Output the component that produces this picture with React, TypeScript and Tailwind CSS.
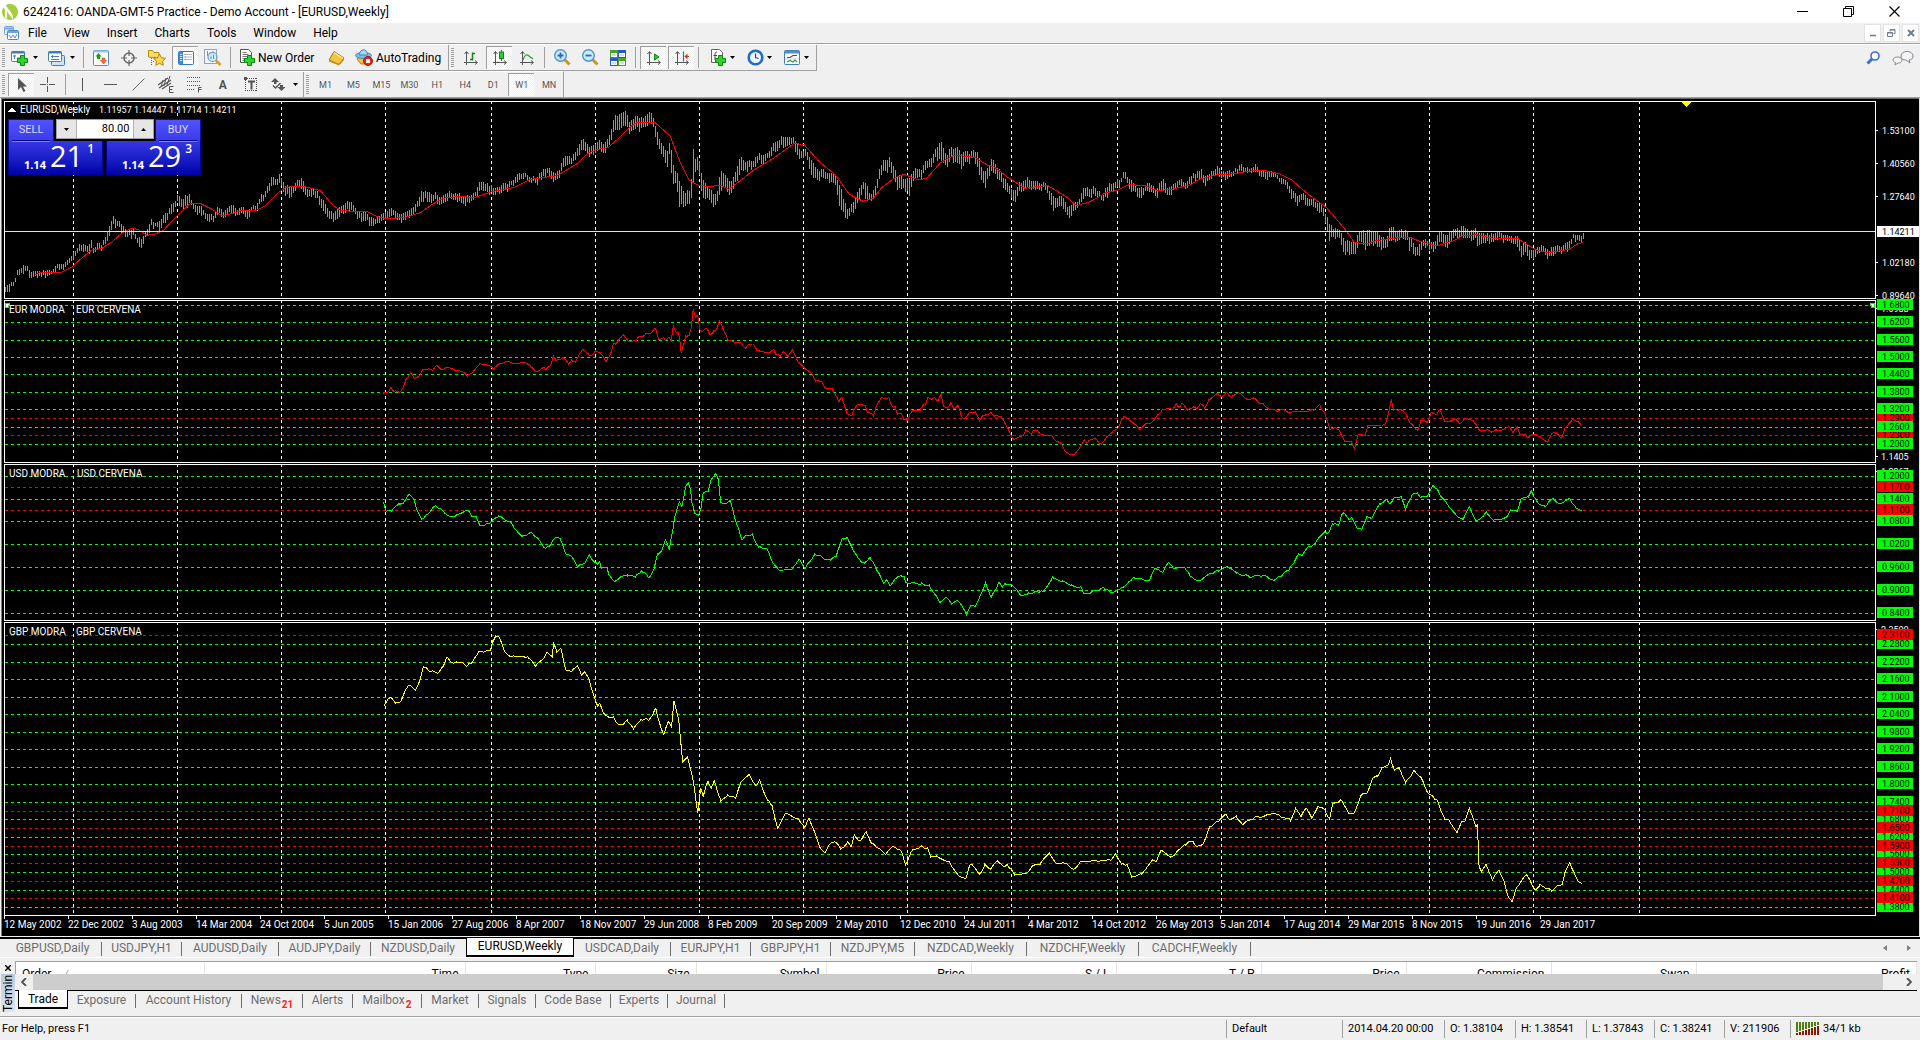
import React from "react";

/* ---------- chart data ---------- */

type Segment = { x0: number; sx: number; y0: number; pts: string };

const SCALE_Y = 3;

const RANGE: Segment[] = [
  {
    x0: 0, sx: 2.45, y0: 100,
    pts: "12,563,582;22,552,570;28,543,550;35,543,549;42,510,528;50,505,525;57,495,515;66,503,520;72,513,532;80,515,530;90,508,527;100,515,530;112,508,528;125,515,528;135,495,510;145,495,512;155,495,515;165,480,500;180,460,480;190,438,460;205,435,452;213,440,455;222,420,450;229,445,463;240,430,450;250,430,445;260,400,430;270,365,395;277,353,378;285,358,380;292,360,378;300,380,400;312,392,413;320,385,410;330,398,408;338,415,440;345,415,442;352,400,420;362,380,400;370,362,382;380,365,380;390,365,392;400,345,372;410,335,355;418,312,335;428,303,320;435,282,308;443,297,322;452,290,322;462,282,312;470,310,325;480,315,338;490,318,342;500,335,350;510,342,362;518,345,358;524,345,365;532,325,348;540,325,345;548,335,350;556,325,345;565,315,338;572,315,342;580,332,350;590,318,335;600,332,350;610,325,345;620,318,330;630,310,328;640,285,308;650,272,290;658,250,275;665,232,260;675,238,255;686,222,250;690,245,275;700,255,280;712,262,295;720,255,275;728,245,262;735,233,258;743,245,280;752,270,290;762,262,285;770,265,282;780,280,305;790,300,325;800,320,350;810,335,358;818,335,360;827,320,352;836,315,340;845,310,335;857,303,330;867,320,340;876,335,352;886,335,360;897,342,362;905,350,378;915,355,372;925,350,375;935,345,365;945,330,355;955,322,345;965,335,355;975,340,362;985,340,362;995,332,352;1005,328,350;1015,315,340;1025,295,318;1032,273,300;1042,275,300;1050,272,300;1057,290,312;1067,280,305;1078,290,312;1090,277,300;1102,277,298;1115,280,300;1127,283,302;1140,290,315;1152,285,305;1165,270,288;1175,242,268;1187,248,270;1200,255,275;1212,265,285;1225,255,272;1240,250,270;1255,238,255;1270,222,245;1280,218,238;1290,222,238;1303,232,248;1315,230,252;1325,218,238;1337,203,225;1350,208,230;1357,220,245;1367,213,230;1380,175,210;1388,168,195;1400,170,192;1410,155,178;1417,133,160;1425,117,145;1435,130,158;1445,140,165;1455,130,158;1465,120,150;1475,128,158;1485,125,155;1495,95,125;1504,45,92;1515,48,92;1525,42,80;1533,35,72;1540,65,95;1550,52,90",
  },
  {
    x0: 560, sx: 2.904, y0: 100,
    pts: "222,52,85;230,52,95;240,55,82;250,42,72;260,35,68;270,55,78;278,85,125;290,120,148;300,142,180;307,155,203;312,150,190;318,127,160;323,150,225;330,210,255;337,210,245;342,230,310;347,250,327;353,262,310;360,275,320;366,285,318;371,263,305;377,280,308;381,230,292;387,138,240;393,180,205;400,165,207;406,198,248;414,240,290;422,245,297;430,263,295;440,275,312;452,285,315;458,272,308;463,212,282;470,212,260;480,225,262;492,247,282;500,240,275;510,215,240;516,188,240;527,168,208;538,190,215;550,178,205;560,185,208;570,168,195;580,158,188;590,165,188;600,162,182;610,142,170;620,125,155;630,128,158;640,112,145;650,110,148;660,112,132;667,112,132;676,105,132;683,122,150;690,140,178;700,155,175;712,147,170;720,162,195;730,180,225;742,202,238;753,212,238;764,207,232;772,225,250;780,218,242;790,215,240;800,235,262;808,252,310;815,265,332;822,300,340;832,320,360;838,330,355;845,310,335;852,305,340;860,285,320;868,262,298;880,247,272;887,245,295;898,285,305;908,275,302;916,258,290;925,215,245;938,180,212;948,185,220;956,170,205;965,195,235;972,210,240;980,230,275;990,230,262;997,240,270;1008,235,280;1013,232,282;1022,215,245;1033,203,230;1045,212,240;1055,192,215;1067,178,205;1080,170,192;1090,145,172;1100,130,180;1108,120,172;1115,160,195;1125,165,198;1133,137,168;1143,145,188;1155,145,188;1165,165,208;1177,150,188;1188,162,190;1200,152,172;1208,152,188;1215,172,230;1225,208,240;1235,215,260;1245,200,228;1253,175,212;1262,192,225;1272,208,245;1282,225,255;1293,242,278;1305,258,285;1313,270,300;1322,272,303;1332,248,275;1345,248,272;1355,233,260;1367,245,270;1382,240,262;1392,250,272;1405,248,265;1415,260,285;1425,280,312;1433,290,330;1443,290,315;1453,290,315;1463,300,335;1472,320,340;1480,315,348;1490,312,335;1500,308,325;1510,288,315;1520,258,295;1530,262,285;1540,265,290;1552,260,282;1566,278,292",
  },
  {
    x0: 1080, sx: 2.904, y0: 100,
    pts: "65,285,300;70,270,290;80,255,285;92,245,268;102,245,268;110,240,262;118,240,255;127,216,240;137,230,250;148,240,272;157,258,280;167,262,285;175,265,295;185,258,280;195,252,278;205,252,275;215,262,290;225,262,285;235,242,268;243,237,268;252,262,285;260,262,292;268,250,275;280,242,262;292,240,260;305,245,265;315,235,258;325,222,240;337,218,238;350,205,235;358,228,255;370,225,245;380,218,235;390,205,225;402,200,225;410,215,235;422,212,238;433,215,238;445,210,225;455,205,222;465,192,215;475,200,220;485,203,220;497,203,215;509,192,215;517,210,228;527,215,232;540,218,235;552,215,230;565,218,232;577,232,245;590,238,250;600,248,268;610,258,285;620,275,298;632,288,315;645,280,302;655,282,318;667,302,322;680,300,322;690,308,335;697,305,335;705,325,345;712,345,370;718,355,400;725,375,422;733,385,415;743,385,412;752,388,415;760,402,440;766,430,472;775,420,460;783,420,455;790,425,462;797,430,465;805,400,445;812,392,425;822,390,430;830,400,448;838,388,435;848,392,430;857,395,438;868,405,445;877,410,445;888,415,440;897,390,425;905,372,420;913,392,420;925,388,418;937,392,418;946,385,412;953,408,440;963,418,452;975,440,462;985,432,465;995,420,445;1008,425,445;1020,425,450;1030,425,448;1043,392,428;1055,405,430;1066,405,442;1078,392,422;1090,385,412;1102,385,412;1113,377,408;1120,385,415;1132,390,418;1145,385,415;1155,395,438;1167,402,430;1180,405,435;1192,400,425;1203,395,420;1217,398,418;1230,402,420;1245,405,425;1255,415,442;1263,412,432;1270,402,445;1280,435,465;1293,430,465;1305,450,480;1317,450,478;1328,440,460;1340,438,460;1353,445,468;1365,448,468;1377,438,462;1387,432,455;1397,445,462;1410,425,450;1422,420,442;1433,403,420;1445,402,420;1457,405,425;1462,390,415",
  },
];

const AVERAGE: Segment[] = [
  {
    x0: 0, sx: 2.45, y0: 100,
    pts: "85,525;100,517;125,518;150,517;175,502;200,475;225,450;250,445;275,425;300,398;325,384;340,390;360,406;380,402;400,392;420,365;440,340;465,312;490,310;520,328;545,348;570,340;590,332;630,330;650,318;680,280;700,262;740,258;785,272;815,315;835,332;900,335;925,350;950,357;1000,350;1030,338;1060,312;1085,295;1120,290;1165,292;1205,275;1260,262;1300,238;1365,227;1415,190;1440,160;1465,148;1490,143;1520,110;1545,80",
  },
  {
    x0: 560, sx: 2.904, y0: 100,
    pts: "222,68;275,67;320,108;350,190;375,240;400,255;430,260;467,256;490,268;520,245;560,212;620,175;680,130;710,135;750,182;800,225;840,283;880,304;910,295;935,262;970,235;1000,223;1040,240;1065,235;1105,188;1145,165;1205,172;1240,195;1260,200;1300,232;1350,265;1415,256;1470,290;1500,317;1540,305;1566,290",
  },
  {
    x0: 1080, sx: 2.904, y0: 100,
    pts: "70,280;110,270;145,253;190,258;225,272;270,267;320,255;345,238;400,224;440,222;510,211;540,212;580,222;615,240;665,285;715,322;765,382;797,427;830,432;860,422;905,415;955,411;990,425;1035,438;1085,422;1110,408;1150,404;1200,415;1270,415;1300,435;1330,452;1360,458;1420,448;1445,432;1460,427",
  },
];

const EUR: Segment[] = [
  {
    x0: 0, sx: 2.45, y0: 100,
    pts: "938,880;950,878;958,862;965,874;982,875;988,862;995,838;1007,818;1015,835;1027,827;1035,810;1050,806;1060,812;1070,796;1083,810;1093,802;1110,808;1135,816;1145,828;1158,818;1175,793;1200,797;1209,808;1222,793;1240,783;1260,790;1285,787;1298,795;1313,816;1333,803;1337,810;1349,797;1356,768;1363,783;1380,772;1393,792;1400,780;1410,786;1427,748;1445,768;1460,752;1470,758;1485,784;1495,765;1503,730;1508,733;1520,712;1527,703;1540,725;1555,722",
  },
  {
    x0: 560, sx: 2.904, y0: 100,
    pts: "222,720;228,710;240,710;250,700;262,700;277,685;288,720;300,712;307,722;315,712;323,722;329,678;335,695;342,698;347,712;352,758;365,708;376,705;381,685;387,628;393,652;400,645;406,690;413,695;425,685;436,705;447,692;454,690;463,662;473,685;487,720;510,727;525,727;538,745;547,733;561,732;572,752;600,758;612,757;620,748;628,765;640,768;650,755;662,770;675,750;690,783;710,805;730,820;742,843;760,846;772,865;790,865;810,905;818,892;833,940;847,948;853,930;865,913;887,917;893,938;903,940;910,948;918,920;932,895;955,892;963,918;973,920;980,942;992,942;998,958;1008,962;1015,945;1025,930;1045,933;1055,915;1062,912;1068,892;1080,900;1088,893;1097,903;1107,883;1113,918;1125,925;1135,910;1145,927;1156,915;1166,950;1175,955;1188,937;1207,935;1218,963;1227,947;1245,943;1252,938;1262,948;1280,948;1292,970;1305,995;1317,1018;1345,1008;1353,990;1368,1003;1375,990;1388,993;1395,1003;1427,1006;1435,1018;1455,1030;1467,1055;1480,1063;1495,1063;1510,1042;1523,1020;1530,1030;1540,1020;1555,1015;1566,1030",
  },
  {
    x0: 1080, sx: 2.904, y0: 100,
    pts: "62,1032;75,1015;95,995;110,985;120,960;128,948;155,968;172,987;190,973;205,972;240,928;270,928;280,912;288,923;297,910;312,930;330,922;340,925;350,910;362,925;375,900;400,880;413,890;425,877;440,892;462,879;485,898;508,895;520,910;532,912;545,925;560,928;575,933;590,928;608,940;625,933;640,935;680,930;696,913;702,930;712,942;725,988;740,982;752,990;768,1025;788,1025;797,1046;807,1005;828,1006;836,978;850,975;875,975;888,970;897,935;904,898;910,930;930,928;947,942;958,968;970,980;980,992;990,962;1008,967;1020,937;1035,943;1045,927;1060,965;1080,963;1090,957;1103,972;1117,955;1140,962;1155,980;1163,993;1185,990;1195,996;1210,988;1225,990;1245,980;1257,998;1270,980;1277,1003;1293,1003;1300,1012;1312,1003;1335,1008;1357,1027;1370,1000;1385,1000;1398,1015;1408,985;1430,957;1445,965;1455,975",
  },
];

const USD: Segment[] = [
  {
    x0: 360, sx: 1.2645, y0: 460,
    pts: "30,127;33,155;40,153;50,130;55,130;62,102;68,118;73,155;78,178;85,165;95,138;103,148;110,165;120,170;135,150;143,170;147,170;152,198;165,188;175,170;190,185;195,205;205,230;215,218;222,230;235,265;240,258;246,235;253,235;260,282;268,290;275,320;285,308;290,285;295,302;300,310;303,305;305,325;312,322;315,345;322,365;330,350;338,345;348,352;356,332;366,352;372,325;376,282;382,270;386,240;391,268;396,205;398,170;404,125;407,140;412,78;415,68;418,90;420,130;423,160;428,165;431,150;434,100;440,95;444,60;450,40;453,55;456,125;462,130;468,120;474,175;483,240;488,225;496,222;504,262;514,265;520,298;530,330;545,330;556,298;563,325;575,282;583,288;588,300;595,300;602,290;610,235;616,232;622,262;632,300;638,310;645,292;655,335;662,370;666,358;670,378;680,350;688,350;690,368;710,372;720,375;726,400;733,428;741,410;748,430;755,420;760,432;767,460;772,438;778,440;784,408;791,368;798,412;805,385;808,365;812,382;816,370;826,378;836,408;846,398;865,395;876,350;888,365;900,375;912,382;916,402;930,392;940,382;950,398;965,382;978,352;998,362;1005,325;1015,338;1022,308;1030,325;1043,322;1050,350;1060,362;1070,348;1085,332;1097,320;1110,338;1125,352;1143,345;1155,362;1175,330;1187,282;1192,288;1200,258;1205,255;1215,228;1220,215;1225,218;1230,190;1238,192;1243,158;1250,178;1254,172;1260,200;1267,208;1273,170;1280,172;1290,130;1298,118;1303,130;1308,112;1317,110;1322,148;1330,105;1337,97;1341,113;1350,108;1357,75;1361,85;1368,112;1380,148;1388,170;1395,178;1403,140;1411,182;1420,170;1424,155;1433,182;1443,178;1450,170;1455,150;1463,155;1468,118;1477,112;1481,92;1490,130;1500,138;1508,115;1515,130;1530,118;1537,140;1545,150",
  },
];

const GBP: Segment[] = [
  {
    x0: 360, sx: 1.2645, y0: 460,
    pts: "30,737;38,712;45,730;52,722;57,692;62,675;70,690;76,660;80,620;87,632;98,640;105,620;110,590;117,608;130,608;135,620;143,602;150,575;165,572;168,545;172,530;176,532;182,570;190,590;212,590;222,618;230,600;237,578;243,590;245,550;249,577;254,565;260,630;267,635;275,618;280,645;284,635;290,660;295,702;300,735;303,730;308,760;315,772;320,770;325,790;332,795;338,780;346,808;355,778;366,778;374,745;379,790;384,825;390,785;394,800;397,722;403,780;408,905;414,890;420,945;424,1005;427,1060;431,985;434,1010;440,962;444,985;448,962;456,1020;465,1005;475,1015;482,965;492,942;501,978;505,960;515,1020;521,1035;528,1105;538,1060;555,1080;563,1100;568,1075;575,1115;582,1165;588,1180;595,1150;602,1148;608,1167;617,1145;621,1160;625,1125;632,1143;640,1115;647,1150;660,1172;664,1183;673,1160;685,1175;690,1215;697,1175;709,1160;718,1165;722,1190;728,1190;745,1205;757,1248;766,1255;771,1215;775,1218;784,1243;790,1213;797,1228;806,1203;814,1220;818,1213;828,1245;842,1240;850,1217;860,1213;872,1178;880,1208;895,1213;902,1228;912,1203;950,1200;955,1180;963,1212;970,1213;976,1250;988,1243;1002,1200;1007,1205;1013,1170;1025,1193;1043,1153;1053,1143;1058,1160;1067,1148;1075,1100;1087,1080;1095,1062;1100,1080;1108,1068;1117,1093;1130,1075;1157,1060;1170,1075;1177,1080;1183,1045;1190,1070;1197,1045;1203,1072;1211,1042;1220,1048;1226,1078;1230,1030;1240,1020;1250,1060;1257,1058;1266,1005;1274,998;1280,955;1287,948;1292,922;1300,915;1303,895;1308,930;1314,922;1322,968;1333,932;1341,950;1350,998;1357,1010;1362,1020;1372,1080;1377,1080;1387,1118;1393,1085;1397,1085;1403,1045;1407,1070;1411,1100;1413,1092;1415,1215;1418,1235;1424,1213;1432,1260;1440,1230;1447,1265;1452,1310;1457,1325;1463,1280;1475,1245;1480,1262;1486,1290;1492,1273;1507,1293;1515,1275;1520,1273;1524,1235;1530,1210;1535,1235;1540,1262;1545,1268",
  },
];

/** Turns segments into [x, y1, y2?] rows in chart pixels. */
function rows(segs: Segment[]): number[][] {
  return segs.flatMap((s) =>
    s.pts.split(";").map((p) => {
      const [x, ...ys] = p.split(",").map(Number);
      return [s.x0 + x / s.sx, ...ys.map((y) => s.y0 + y / SCALE_Y)];
    })
  );
}

function sample(data: number[][], x: number): number[] {
  let i = 1;
  while (i < data.length - 1 && data[i][0] < x) i++;
  const a = data[i - 1];
  const b = data[i];
  const t = Math.min(1, Math.max(0, (x - a[0]) / (b[0] - a[0] || 1)));
  return a.slice(1).map((v, k) => v + (b[k + 1] - v) * t);
}

const noise = (n: number) => {
  const v = Math.sin(n * 12.9898) * 43758.5453;
  return v - Math.floor(v) - 0.5;
};

function linePath(segs: Segment[], jitter: number): string {
  const data = rows(segs);
  const pts = data.map((r) => [r[0], r[1]]);
  if (jitter > 0) {
    for (let x = data[0][0] + 1; x < data[data.length - 1][0]; x += 3) {
      pts.push([x, sample(data, x)[0] + noise(x) * jitter]);
    }
    pts.sort((a, b) => a[0] - b[0]);
  }
  return "M" + pts.map((p) => `${p[0].toFixed(1)} ${p[1].toFixed(1)}`).join("L");
}

function barsPath(): string {
  const data = rows(RANGE);
  let d = "";
  for (let x = 5; x <= 1583; x += 2) {
    const [hi, lo] = sample(data, x);
    const n = noise(x) * 3;
    d += `M${x}.5 ${Math.round(hi + n)}V${Math.round(lo + n + noise(x + 7) * 4)}`;
  }
  return d;
}

const PERIODS = [73, 177, 281, 385, 491, 595, 699, 803, 907, 1011, 1117, 1221, 1325, 1429, 1533, 1639];

const DATES = [
  "12 May 2002", "22 Dec 2002", "3 Aug 2003", "14 Mar 2004", "24 Oct 2004", "5 Jun 2005", "15 Jan 2006", "27 Aug 2006",
  "8 Apr 2007", "18 Nov 2007", "29 Jun 2008", "8 Feb 2009", "20 Sep 2009", "2 May 2010", "12 Dec 2010", "24 Jul 2011",
  "4 Mar 2012", "14 Oct 2012", "26 May 2013", "5 Jan 2014", "17 Aug 2014", "29 Mar 2015", "8 Nov 2015", "19 Jun 2016",
  "29 Jan 2017",
];

type Level = [number, string, "g" | "r"];

const EUR_LEVELS: Level[] = [
  [418, "1.2900", "r"], [435, "1.2300", "r"],
  [305, "1.6800", "g"], [322, "1.6200", "g"], [340, "1.5600", "g"], [357, "1.5000", "g"], [374, "1.4400", "g"],
  [392, "1.3800", "g"], [409, "1.3200", "g"], [427, "1.2600", "g"], [444, "1.2000", "g"],
];
const USD_LEVELS: Level[] = [
  [476, "1.2000", "g"], [499, "1.1400", "g"], [521, "1.0800", "g"], [544, "1.0200", "g"], [567, "0.9600", "g"],
  [590, "0.9000", "g"], [613, "0.8400", "g"], [487, "1.1700", "r"], [510, "1.1100", "r"],
];
const GBP_LEVELS: Level[] = [
  [644, "2.2800", "g"], [662, "2.2200", "g"], [679, "2.1600", "g"], [697, "2.1000", "g"], [714, "2.0400", "g"],
  [732, "1.9800", "g"], [749, "1.9200", "g"], [767, "1.8600", "g"], [784, "1.8000", "g"], [802, "1.7400", "g"],
  [819, "1.6800", "g"], [837, "1.6200", "g"], [854, "1.5600", "g"], [872, "1.5000", "g"], [890, "1.4400", "g"],
  [907, "1.3800", "g"],
  [635, "2.3100", "r"], [811, "1.7100", "r"], [828, "1.6500", "r"], [846, "1.5900", "r"], [863, "1.5300", "r"],
  [881, "1.4700", "r"], [898, "1.4100", "r"],
];

/* ---------- chart panes ---------- */

type PaneProps = {
  top: number;
  height: string;
  levels?: Level[];
  axis: [number, string][];
  axisInset?: number;
  label: string;
  children: React.ReactNode;
  overlay?: React.ReactNode;
};

function Pane({ top, height, levels = [], axis, axisInset = 4, label, children, overlay }: PaneProps) {
  return (
    <section aria-label={label} className={`flex ${height} shrink-0`}>
      <div className="relative min-w-0 flex-1 overflow-hidden border border-white">
        <svg className="block h-full w-full" shapeRendering="crispEdges">
          <g transform={`translate(-5 ${-top - 1})`} fill="none">
            {levels.map(([y, t, c]) => (
              <line key={t} x1="5" x2="120%" y1={y + 0.5} y2={y + 0.5} stroke={c === "g" ? "#00ff00" : "#ff0000"} strokeDasharray="3 3" />
            ))}
            {PERIODS.map((x) => (
              <line key={x} x1={x + 0.5} x2={x + 0.5} y1={top} y2="2000" stroke="#fff" strokeDasharray="3 3" />
            ))}
            {children}
          </g>
        </svg>
        {overlay}
      </div>
      <svg className="block h-full w-[43px] shrink-0 overflow-visible" fontFamily="Roboto, sans-serif" fontSize="9" shapeRendering="crispEdges">
        <g transform={`translate(0 ${-top})`}>
          {axis.map(([y, t]) => (
            <g key={t}>
              <line x1="0" x2="2" y1={y + 0.5} y2={y + 0.5} stroke="#fff" />
              <text x={axisInset + 1} y={y + 4} fill="#fff">{t}</text>
            </g>
          ))}
          {levels.map(([y, t, c]) => (
            <g key={t}>
              <rect x="1" y={y - 6} width="36" height="11" fill={c === "g" ? "#00ff00" : "#ff0000"} />
              <text x="6" y={y + 3} fill="#000">{t}</text>
            </g>
          ))}
          {label === "Price" && (
            <g>
              <rect x="1" y="226" width="42" height="11" fill="#fff" />
              <text x="6" y="235" fill="#000">1.14211</text>
            </g>
          )}
        </g>
      </svg>
    </section>
  );
}

function PaneTitle({ y, cur, x2 }: { y: number; cur: string; x2: number }) {
  return (
    <g fill="#fff" fontFamily="Roboto, sans-serif" fontSize="10">
      <text x="9" y={y}>{cur} MODRA</text>
      <text x={x2} y={y}>{cur} CERVENA</text>
    </g>
  );
}

function OneClick() {
  const top = "flex h-[22px] w-[46px] justify-center border border-b-0 border-[#1010a0] bg-linear-to-b from-[#5252ff] to-[#3a3aea] pt-[3px] text-[11px] leading-[14px] text-[#dcdcff]";
  const bottom = "flex h-[34px] w-[95px] items-end border border-t-0 border-[#0000a0] bg-linear-to-b from-[#3636e4] to-[#0000aa] text-white";
  const step = "flex w-[19px] items-center justify-center bg-[#e6e6e6]";
  return (
    <div className="absolute top-[17px] left-[3px] w-[193px] bg-black">
      <div className="flex justify-between">
        <button className={top}>SELL</button>
        <div className="flex h-5 w-[98px] border border-[#a0a0a0] bg-white">
          <button className={step} aria-label="Decrease volume">
            <svg width="5" height="3"><path d="M0 0H5L2.500 3Z" /></svg>
          </button>
          <input
            aria-label="Volume"
            defaultValue="80.00"
            className="w-[58px] min-w-0 flex-1 border-x border-[#b0b0b0] bg-white pr-[3px] text-right text-[11px] text-black outline-none"
          />
          <button className={step} aria-label="Increase volume">
            <svg width="5" height="3"><path d="M0 3H5L2.500 0Z" /></svg>
          </button>
        </div>
        <button className={top}>BUY</button>
      </div>
      <div className="flex justify-between">
        <div className={bottom}>
          <Quote a="1.14" b="21" c="1" />
        </div>
        <div className={bottom}>
          <Quote a="1.14" b="29" c="3" />
        </div>
      </div>
      <div className="absolute top-[21px] left-1 h-[2px] w-[38px] border-t border-b border-t-[#000080] border-b-[#8080ff]" />
      <div className="absolute top-[21px] right-1 h-[2px] w-[38px] border-t border-b border-t-[#000080] border-b-[#8080ff]" />
    </div>
  );
}

function Quote({ a, b, c }: { a: string; b: string; c: string }) {
  return (
    <div className="flex h-full w-full justify-end pr-2 font-['Open_Sans',sans-serif]">
      <span className="self-end pb-[2px] text-[11px] leading-[14px] font-bold">{a}</span>
      <span className="ml-1 text-[29px] leading-[29px]">{b}</span>
      <span className="ml-1 pt-[2px] text-[12px] leading-[12px] font-semibold">{c}</span>
    </div>
  );
}

function Chart() {
  return (
    <main className="flex h-[838px] border-r border-l border-[#f0f0f0] border-r-[#e0e0e0] bg-[#808080] pl-px">
      <div className="min-w-0 flex-1 border-t border-[#696969] bg-black">
        <div className="flex flex-col gap-px pt-[2px] pl-[2px]">
          <Pane
            label="Price"
            top={101}
            height="h-[198px]"
            axisInset={5}
            axis={[[130, "1.53100"], [163, "1.40560"], [196, "1.27640"], [262, "1.02180"], [295, "0.89640"]]}
            overlay={<OneClick />}
          >
            <path d={barsPath()} stroke="#00ff00" />
            <path d={linePath(AVERAGE, 0)} stroke="#ff0000" />
            <line x1="5" x2="120%" y1="231.5" y2="231.5" stroke="#ffff00" />
            <path d="M1682 102H1691L1686.500 107Z" fill="#ffff00" />
            <path d="M8 112H16L12 107Z" fill="#fff" />
            <g fill="#fff" fontFamily="Roboto, sans-serif">
              <text x="20" y="113" fontSize="10">EURUSD,Weekly</text>
              <text x="99" y="113" fontSize="9">1.11957 1.14447 1.11714 1.14211</text>
            </g>
          </Pane>
          <Pane label="EUR" top={300} height="h-[163px]" levels={EUR_LEVELS} axis={[[308, "1.6988"], [456, "1.1405"]]}>
            <path d={linePath(EUR, 1.6)} stroke="#ff0000" />
            <path d="M5 303h4v2h-1v2h-3zM1870 303h4v4h-3v-2h-1z" fill="#fff" stroke="#00ff00" />
            <PaneTitle y={313} cur="EUR" x2={76} />
          </Pane>
          <Pane label="USD" top={464} height="h-[157px]" levels={USD_LEVELS} axis={[[471, "1.2267"]]}>
            <path d={linePath(USD, 2.4)} stroke="#00ff00" />
            <PaneTitle y={477} cur="USD" x2={77} />
          </Pane>
          <Pane label="GBP" top={622} height="h-[294px]" levels={GBP_LEVELS} axis={[[629, "2.3500"]]}>
            <path d={linePath(GBP, 2.4)} stroke="#ffff00" />
            <PaneTitle y={635} cur="GBP" x2={76} />
          </Pane>
        </div>
        <ol className="flex overflow-hidden pl-[2px]">
          {DATES.map((d) => (
            <li key={d} className="w-16 shrink-0 text-[10px] leading-[12px] whitespace-nowrap text-white">
              <div className="h-[3px] w-px bg-white" />
              {d}
            </li>
          ))}
        </ol>
      </div>
    </main>
  );
}

/* ---------- icons ---------- */

function Svg({ w = 16, h = 16, children }: { w?: number; h?: number; children: React.ReactNode }) {
  return (
    <svg width={w} height={h} viewBox={`0 0 ${w} ${h}`} fill="none" className="shrink-0">
      {children}
    </svg>
  );
}

const Plus = ({ x, y }: { x: number; y: number }) => (
  <path transform={`translate(${x} ${y})`} d="M3.500 .5h4v3h3v4h-3v3h-4v-3h-3v-4h3z" fill="#2fd32f" stroke="#0a8a0a" />
);
const Axes = () => <path d="M3.500 2v13M1 12.500h13M1.500 4l2-2.500 2 2.500M12 10.500l2.500 2-2.500 2" stroke="#555" />;

const I = {
  logo: (
    <Svg w={16} h={16}>
      <circle cx="8" cy="8" r="8" fill="#a4cf3a" />
      <path d="M1 3 3.500 1 11 11v4.500L5 7.500V15L3 13.500V5.500z" fill="#fff" />
      <path d="M6.500 0H10l3 4v8l-1.500 2z" fill="#a4cf3a" />
    </Svg>
  ),
  doc: (
    <Svg w={15} h={14}>
      <rect x=".5" y=".5" width="9" height="8" rx="1" fill="#eef5fd" stroke="#6fa3dc" />
      <path d="M.5 2.500h9" stroke="#6fa3dc" strokeWidth="2" />
      <rect x="3.500" y="4.500" width="11" height="9" rx="1" fill="#fff" stroke="#4f86c6" />
      <path d="M4 6h10" stroke="#6fa3dc" strokeWidth="2" />
      <path d="M5 9l2 3 2-3 2 3 2-4" stroke="#5a8cc8" />
    </Svg>
  ),
  newChart: (
    <Svg w={17} h={16}>
      <rect x=".5" y="1.500" width="13" height="10" rx="1" fill="#fff" stroke="#3f7dbb" />
      <path d="M.5 2.500h13" stroke="#3f7dbb" strokeWidth="2" />
      <path d="M3.500 5v4M2 6h3M6 8h5" stroke="#4a7fb5" />
      <Plus x={6} y={5} />
    </Svg>
  ),
  profiles: (
    <Svg w={17} h={16}>
      <rect x="3.500" y="5.500" width="13" height="10" rx="1" fill="#cfe2f6" stroke="#3f7dbb" />
      <rect x=".5" y="1.500" width="13" height="10" rx="1" fill="#fff" stroke="#3f7dbb" />
      <path d="M.5 2.500h13" stroke="#3f7dbb" strokeWidth="2" />
      <path d="M3 6.500h8M4.500 5v3M3 9.500h8" stroke="#4a7fb5" />
    </Svg>
  ),
  market: (
    <Svg>
      <rect x=".5" y=".5" width="15" height="15" rx="1" fill="#fff" stroke="#4f8fd0" />
      <path d="M1 1.500h14" stroke="#9cc6ee" strokeWidth="2" />
      <path d="M5.500 3 8.500 6.500H7V9H4V6.500H2.500z" fill="#14a014" />
      <path d="M10.500 14 7.500 10.500H9V8h3v2.500h1.500z" fill="#f0702a" stroke="#c04010" strokeWidth=".5" />
    </Svg>
  ),
  target: (
    <Svg>
      <circle cx="8" cy="8" r="5" stroke="#666" strokeWidth="1.500" />
      <path d="M8 0v6M8 10v6M0 8h6M10 8h6" stroke="#666" strokeWidth="1.200" />
    </Svg>
  ),
  folderStar: (
    <Svg w={18} h={17}>
      <path d="M.5 8V1.500h4l1.500 2h5V9z" fill="#f8dc68" stroke="#b88a10" />
      <path d="M3.500 9v7M5 12.500h2" stroke="#666" strokeDasharray="1 1" />
      <path d="M11.500 5l1.900 3.800 4.100.5-3 2.900.8 4.100-3.800-2-3.700 2 .7-4.100-3-2.900 4.100-.5z" fill="#fbd84c" stroke="#b8860b" />
    </Svg>
  ),
  terminal: (
    <Svg w={16} h={14}>
      <rect x=".5" y=".5" width="15" height="13" rx="1" fill="#fff" stroke="#2f78c4" />
      <rect x="1" y="1" width="4" height="12" fill="#3b8ad8" />
      <path d="M2 3.500h2M2 5.500h2M2 7.500h2M2 9.500h2" stroke="#cfe4f8" />
      <path d="M7 3.500h7M7 6h7M7 8.500h7" stroke="#a8bccc" />
      <path d="M6.500 3.500h1M6.500 6h1M6.500 8.500h1" stroke="#c03030" />
    </Svg>
  ),
  tester: (
    <Svg w={18} h={17}>
      <rect x=".5" y=".5" width="12" height="14" fill="#f2f6fa" stroke="#8fa4b8" />
      <path d="M3.500 2v5M6 3v3M9 2v4" stroke="#7890a8" />
      <circle cx="8.500" cy="8" r="4.500" fill="#cfe6fa" fillOpacity=".85" stroke="#6c9cc8" strokeWidth="1.200" />
      <path d="M7 10V7.500M9.500 10V6" stroke="#6a8cae" />
      <path d="M12 11.500l4.500 4.500" stroke="#d8a020" strokeWidth="2.500" />
    </Svg>
  ),
  order: (
    <Svg w={17} h={17}>
      <path d="M1.500.5h8l3 3v10h-11z" fill="#fff" stroke="#555" />
      <path d="M3.500 3.500h4M3.500 5.500h6M3.500 7.500h6M3.500 9.500h3M3.500 11.500h3" stroke="#777" />
      <Plus x={5} y={6} />
    </Svg>
  ),
  book: (
    <Svg w={17} h={16}>
      <path d="M1 10 6 1.500l10 6.500-5 6.500z" fill="#f4c440" stroke="#a87408" />
      <path d="M1 10l10 4.500 5-6.500v2l-5 5.500L1 11.500z" fill="#c88c18" />
      <path d="M6 2.500l9 6" stroke="#fbe69a" strokeWidth="1.500" />
    </Svg>
  ),
  auto: (
    <Svg w={18} h={17}>
      <path d="M2 10c1-3 13-3 14 0l-2 5H6z" fill="#f3c13c" stroke="#b88210" />
      <ellipse cx="8.500" cy="6.500" rx="8" ry="3" fill="#7fbbe2" stroke="#3f86b8" />
      <path d="M4.500 6c0-7 8-7 8 0z" fill="#a9d6f0" stroke="#3f86b8" />
      <circle cx="13" cy="12" r="4.500" fill="#e02818" stroke="#a81408" />
      <rect x="11" y="10" width="4" height="4" fill="#fff" />
    </Svg>
  ),
  bars: (
    <Svg>
      <Axes />
      <path d="M9.500 2.500v8M9.500 3.500H12M7 9.500h2.500" stroke="#0a8a1a" strokeWidth="1.500" />
    </Svg>
  ),
  candles: (
    <Svg>
      <Axes />
      <path d="M9.500 0v11" stroke="#0a8a1a" />
      <rect x="7.500" y="2" width="4" height="6.500" fill="#35c735" stroke="#0a8a1a" />
    </Svg>
  ),
  line: (
    <Svg>
      <Axes />
      <path d="M4 10C6 4 8 4 10 6s3 2 4 3" stroke="#2c9c3c" strokeWidth="1.200" />
    </Svg>
  ),
  zoomIn: (
    <Svg w={17} h={17}>
      <path d="M10 10l5.500 5.500" stroke="#c8981c" strokeWidth="3" />
      <circle cx="6.500" cy="6.500" r="5.800" fill="#cdeafc" stroke="#4f94cf" strokeWidth="1.400" />
      <path d="M3.500 6.500h6M6.500 3.500v6" stroke="#2b6cb0" strokeWidth="1.800" />
    </Svg>
  ),
  zoomOut: (
    <Svg w={17} h={17}>
      <path d="M10 10l5.500 5.500" stroke="#c8981c" strokeWidth="3" />
      <circle cx="6.500" cy="6.500" r="5.800" fill="#cdeafc" stroke="#4f94cf" strokeWidth="1.400" />
      <path d="M3.500 6.500h6" stroke="#2b6cb0" strokeWidth="1.800" />
    </Svg>
  ),
  tile: (
    <Svg w={16} h={16}>
      <path d="M0 0h8v8H0zM8 8h8v8H8z" fill="#46a61e" />
      <path d="M8 0h8v8H8zM0 8h8v8H0z" fill="#2458c8" />
      <path d="M1 3h6v4H1zM9 3h6v4H9zM1 11h6v4H1zM9 11h6v4H9z" fill="#fff" />
      <path d="M2 5h4M10 5h4M2 13h4M10 13h4" stroke="#9cbce0" />
    </Svg>
  ),
  scroll: (
    <Svg>
      <Axes />
      <path d="M8.500 4v6l4.500-3z" fill="#35c735" stroke="#0a8a1a" />
    </Svg>
  ),
  shift: (
    <Svg>
      <Axes />
      <path d="M9.500 1.500v10" stroke="#2a6cb0" strokeWidth="1.200" />
      <path d="M15 6.500h-3" stroke="#c03818" strokeWidth="1.200" />
      <path d="M10.500 6.500l3-3v6z" fill="#c03818" />
    </Svg>
  ),
  indicators: (
    <Svg w={17} h={17}>
      <path d="M1.500.5h8l3 3v10h-11z" fill="#fff" stroke="#666" />
      <path d="M7 3c-2 0-2 1-2 3v5M3.500 6.500H7" stroke="#444" />
      <Plus x={5} y={6} />
    </Svg>
  ),
  clock: (
    <Svg w={17} h={17}>
      <circle cx="8.500" cy="8.500" r="6.800" fill="#eef6ff" stroke="#1e6cc8" strokeWidth="2.600" />
      <path d="M8.500 4.500v4l3 1" stroke="#445" strokeWidth="1.200" />
    </Svg>
  ),
  template: (
    <Svg w={17} h={15}>
      <rect x=".5" y=".5" width="15" height="14" rx="1" fill="#fff" stroke="#3f7dbb" />
      <path d="M1 2h14" stroke="#4f8fd0" strokeWidth="3" />
      <path d="M3 7.500h3l3-2h4" stroke="#a03018" strokeWidth="1.200" />
      <path d="M3 12l3-1.500 3 1.500 2-2 2 2" stroke="#2a9c3a" strokeWidth="1.200" />
      <path d="M1 9h14" stroke="#aac" strokeWidth=".6" />
    </Svg>
  ),
  cursor: (
    <Svg w={12} h={16}>
      <path d="M2 1v12l3-3 2.500 5 2-1L7 9.500h4z" fill="#555" />
    </Svg>
  ),
  cross: (
    <Svg>
      <path d="M7.500 0v6M7.500 9v6M0 7.500h6M9 7.500h6" stroke="#555" />
      <path d="M7.500 7v1" stroke="#555" />
    </Svg>
  ),
  vline: (
    <Svg w={4} h={14}>
      <path d="M1.500 0v13" stroke="#555" strokeWidth="1" />
    </Svg>
  ),
  hline: (
    <Svg w={13} h={4}>
      <path d="M0 1.500h13" stroke="#555" />
    </Svg>
  ),
  diag: (
    <Svg w={13} h={13}>
      <path d="M.5 12.500l12-12" stroke="#666" />
    </Svg>
  ),
  channel: (
    <Svg w={17} h={17}>
      <path d="M0 9 10 2M1 12l12-8M4 13l9-6" stroke="#555" strokeWidth="1.200" />
      <path d="M3 11l2-7M6 10l2-8M9 9l3-9" stroke="#555" />
      <path d="M15.500 10.500h-4v6h4M11.500 13.500h3" stroke="#555" />
    </Svg>
  ),
  fibo: (
    <Svg w={15} h={17}>
      <path d="M0 1.500h14M0 5.500h14M0 9.500h14M0 13.500h8" stroke="#555" strokeDasharray="1 1" />
      <path d="M14.500 11.500h-3v5M11.500 13.500h3" stroke="#555" />
    </Svg>
  ),
  label: (
    <Svg w={14} h={15}>
      <path d="M1 1.500h12M1 13.500h12" stroke="#555" strokeDasharray="1 1" />
      <path d="M1.500 1v13M12.500 1v13" stroke="#555" strokeDasharray="1 1" />
      <rect width="3" height="3" fill="#555" />
      <path d="M4 4.500h7M7.500 4.500v8" stroke="#555" strokeWidth="2" />
    </Svg>
  ),
  arrows: (
    <Svg w={15} h={14}>
      <path d="M4 0 8 4 5.500 4 5.500 6 3 6 3 4H0z" fill="#555" />
      <path d="M2 7.500l2.500 2.500L9.500 5" stroke="#555" strokeWidth="1.500" />
      <path d="M10.500 13l-4-4H9V7h3v2h2.500z" fill="#555" />
    </Svg>
  ),
};

/* ---------- toolbar parts ---------- */

const DropArrow = ({ label }: { label: string }) => (
  <button aria-label={label} className="flex h-full items-center">
    <svg width="5" height="3"><path d="M0 0H5L2.500 3Z" fill="#000" /></svg>
  </button>
);

const Grip = () => (
  <div className="mr-[3px] ml-[2px] h-5 w-[3px] self-center bg-[repeating-linear-gradient(to_bottom,#a0a0a0_0_1px,transparent_1px_2px)]" />
);

const Sep = () => (
  <div className="flex w-[7px] items-center justify-center">
    <div className="h-[21px] w-px bg-[#a0a0a0]" />
  </div>
);

function Tool({ label, on, className = "w-7", children }: { label: string; on?: boolean; className?: string; children: React.ReactNode }) {
  return (
    <button aria-label={label} aria-pressed={on} className={`flex ${className} items-center justify-center text-[#555]`}>
      <span
        className={
          on
            ? "flex h-[23px] w-[26px] items-center justify-center border-t border-l border-[#a0a0a0] bg-[repeating-conic-gradient(#fff_0_25%,#f0f0f0_0_50%)] bg-[length:2px_2px]"
            : "flex items-center justify-center"
        }
      >
        {children}
      </span>
    </button>
  );
}

function ToolbarRows() {
  return (
    <div className="flex bg-[#f0f0f0]">
      <div className="flex-1">
        <div className="flex h-[26px] w-[817px] border-r border-b border-[#a0a0a0]">
          <Grip />
          <Tool label="New chart" className="w-[23px]">{I.newChart}</Tool>
          <div className="flex w-[14px] pl-[2px]"><DropArrow label="New chart menu" /></div>
          <Tool label="Profiles" className="w-[23px]">{I.profiles}</Tool>
          <div className="flex w-[12px] pl-[2px]"><DropArrow label="Profiles menu" /></div>
          <Sep />
          <Tool label="Market Watch">{I.market}</Tool>
          <Tool label="Data Window">{I.target}</Tool>
          <Tool label="Navigator">{I.folderStar}</Tool>
          <Tool label="Terminal" on>{I.terminal}</Tool>
          <Tool label="Strategy Tester">{I.tester}</Tool>
          <Sep />
          <button className="flex w-[86px] items-center gap-[2px] pl-[5px] whitespace-nowrap">{I.order}New Order</button>
          <Tool label="MetaEditor" className="w-8">{I.book}</Tool>
          <button className="flex w-[97px] items-center gap-[3px] border-r border-[#a0a0a0] pl-[3px] whitespace-nowrap">{I.auto}AutoTrading</button>
          <Grip />
          <Tool label="Bar Chart">{I.bars}</Tool>
          <Tool label="Candlesticks" on>{I.candles}</Tool>
          <Tool label="Line Chart">{I.line}</Tool>
          <Sep />
          <Tool label="Zoom In">{I.zoomIn}</Tool>
          <Tool label="Zoom Out">{I.zoomOut}</Tool>
          <Tool label="Tile Windows">{I.tile}</Tool>
          <Sep />
          <Tool label="Auto Scroll" on>{I.scroll}</Tool>
          <Tool label="Chart Shift" on>{I.shift}</Tool>
          <Sep />
          <div className="flex gap-2 pl-1">
            <div className="flex"><Tool label="Indicators" className="w-6">{I.indicators}</Tool><DropArrow label="Indicators menu" /></div>
            <div className="flex"><Tool label="Periods" className="w-6">{I.clock}</Tool><DropArrow label="Periods menu" /></div>
            <div className="flex"><Tool label="Templates" className="w-6">{I.template}</Tool><DropArrow label="Templates menu" /></div>
          </div>
        </div>
        <div className="flex h-[26px] w-[564px] border-t border-r border-t-white border-r-[#a0a0a0] text-[9px]">
          <Grip />
          <Tool label="Cursor" on className="w-[26px]">{I.cursor}</Tool>
          <Tool label="Crosshair">{I.cross}</Tool>
          <Sep />
          <Tool label="Vertical Line">{I.vline}</Tool>
          <Tool label="Horizontal Line">{I.hline}</Tool>
          <Tool label="Trendline">{I.diag}</Tool>
          <Tool label="Equidistant Channel">{I.channel}</Tool>
          <Tool label="Fibonacci">{I.fibo}</Tool>
          <Tool label="Text"><span className="text-[12px] font-bold">A</span></Tool>
          <Tool label="Text Label">{I.label}</Tool>
          <Tool label="Arrows">{I.arrows}</Tool>
          <div className="flex w-[10px]"><DropArrow label="Arrows menu" /></div>
          <div className="w-px bg-[#a0a0a0]" />
          <Grip />
          {["M1", "M5", "M15", "M30", "H1", "H4", "D1", "W1", "MN"].map((p) => (
            <Tool key={p} label={p} on={p === "W1"}>{p}</Tool>
          ))}
        </div>
      </div>
      <div className="flex h-[26px] items-center gap-[12px] pr-[6px]">
        <button aria-label="Search">
          <Svg w={14} h={14}>
            <path d="M6 8 1.500 12.500" stroke="#3a6fd0" strokeWidth="3" />
            <circle cx="9" cy="5" r="4" fill="#fff" stroke="#3a6fd0" strokeWidth="1.600" />
          </Svg>
        </button>
        <button aria-label="Chat">
          <Svg w={22} h={15}>
            <path d="M9 5c0-6 12-6 12 0 0 3-2 4-4 4l1 3-4-3c-3 0-5-1-5-4z" fill="#f4f4f8" stroke="#888" />
            <path d="M1 9c0-4 9-4 9 0 0 3-3 3-4 3l-3 2 .5-2.500C2 11 1 10 1 9z" fill="#f4f4f8" stroke="#888" />
          </Svg>
        </button>
      </div>
    </div>
  );
}

/* ---------- bottom area ---------- */

const CHART_TABS: [string, string][] = [
  ["GBPUSD,Daily", "w-[98px]"], ["USDJPY,H1", "w-20"], ["AUDUSD,Daily", "w-[97px]"], ["AUDJPY,Daily", "w-[92px]"],
  ["NZDUSD,Daily", "w-[95px]"], ["EURUSD,Weekly", "w-[108px]"], ["USDCAD,Daily", "w-[97px]"], ["EURJPY,H1", "w-20"],
  ["GBPJPY,H1", "w-20"], ["NZDJPY,M5", "w-[84px]"], ["NZDCAD,Weekly", "w-[112px]"], ["NZDCHF,Weekly", "w-[112px]"],
  ["CADCHF,Weekly", "w-[112px]"],
];

const TERM_TABS: [string, string, string?][] = [
  ["Trade", "w-[50px]"], ["Exposure", "w-[68px]"], ["Account History", "w-[106px]"], ["News", "w-[61px]", "21"],
  ["Alerts", "w-[50px]"], ["Mailbox", "w-[69px]", "2"], ["Market", "w-[57px]"], ["Signals", "w-[57px]"],
  ["Code Base", "w-[75px]"], ["Experts", "w-[57px]"], ["Journal", "w-[57px]"],
];

function Tab({ name, width, active, count, divider }: { name: string; width: string; active: boolean; count?: string; divider: boolean }) {
  return (
    <button
      role="tab"
      aria-selected={active}
      className={`relative ${width} shrink-0 text-center whitespace-nowrap ${
        active ? "-mt-px h-[19px] border border-t-0 border-b-2 border-black bg-white text-black" : "h-[18px] pr-px text-[#6d6d6d]"
      }`}
    >
      {name}
      {count && <span className="relative top-1 ml-px text-[10px] leading-none font-bold text-[#ff2020]">{count}</span>}
      {divider && <span className="absolute top-[3px] right-0 h-[14px] w-px bg-[#6d6d6d]" />}
    </button>
  );
}

const COLUMNS: [string, string][] = [
  ["Order", "w-[188px]"], ["Time", "w-[261px]"], ["Type", "w-[130px]"], ["Size", "w-[101px]"], ["Symbol", "w-[130px]"],
  ["Price", "w-[145px]"], ["S / L", "w-[145px]"], ["T / P", "w-[145px]"], ["Price", "w-[145px]"],
  ["Commission", "w-[145px]"], ["Swap", "w-[145px]"], ["Profit", "w-auto"],
];

function Terminal() {
  return (
    <section aria-label="Terminal" className="flex h-[54px] pt-[3px]">
      <div className="flex w-[15px] shrink-0 flex-col items-center">
        <button aria-label="Close terminal" className="flex h-[13px] shrink-0 items-center">
          <svg width="6" height="6"><path d="M0 0l6 6M6 0l-6 6" stroke="#000" strokeWidth="1.500" /></svg>
        </button>
        <div className="h-[38px] w-[14px] overflow-hidden bg-linear-to-b from-[#bccbdb] to-[#dbe6f4]">
          <div className="h-[38px] w-[14px] rotate-180 text-[12px] leading-[14px] whitespace-nowrap [writing-mode:vertical-rl]">Termin.</div>
        </div>
      </div>
      <div className="mr-[3px] min-w-0 flex-1">
        <div className="h-[13px] overflow-hidden border-t border-l border-[#a0a0a0] bg-white">
          <table className="w-full table-fixed border-collapse">
            <thead>
              <tr>
                {COLUMNS.map(([c, w], i) => (
                  <th
                    key={i}
                    scope="col"
                    className={`${w} h-6 border-r border-[#e5e5e5] p-0 pt-[5px] align-top font-normal text-black ${
                      i === 0 ? "pl-[6px] text-left" : "pr-[6px] text-right"
                    }`}
                  >
                    {c}
                    {i === 0 && <span className="ml-3 text-[#888]">⁄</span>}
                  </th>
                ))}
              </tr>
            </thead>
          </table>
        </div>
        <div className="flex h-4 bg-[#f0f0f0]">
          <button aria-label="Scroll left" className="flex w-[18px] items-center justify-center">
            <svg width="6" height="8" fill="none"><path d="M5 0L1 4l4 4" stroke="#505050" strokeWidth="1.800" /></svg>
          </button>
          <div className="flex-1 bg-[#cdcdcd]" />
          <button aria-label="Scroll right" className="flex w-[34px] items-center justify-end pr-[5px]">
            <svg width="6" height="8" fill="none"><path d="M1 0l4 4-4 4" stroke="#505050" strokeWidth="1.800" /></svg>
          </button>
        </div>
        <div role="tablist" className="flex h-5 border-t border-black pl-[3px] leading-[18px]">
          {TERM_TABS.map(([n, w, c], i) => (
            <Tab key={n} name={n} width={w} count={c} active={i === 0} divider={i > 0} />
          ))}
        </div>
      </div>
    </section>
  );
}

function StatusBar() {
  const cell = "flex h-[18px] shrink-0 items-center border-l border-[#a0a0a0] pl-[5px] whitespace-nowrap";
  return (
    <footer className="flex h-[24px] items-center border-t border-[#a0a0a0] bg-[#f0f0f0] pl-[2px] text-[11px] text-black shadow-[inset_0_1px_0_#fff]">
      <div className="flex-1">For Help, press F1</div>
      <div className={`${cell} w-[116px]`}>Default</div>
      <div className={`${cell} w-[102px]`}>2014.04.20 00:00</div>
      <div className={`${cell} w-[71px]`}>O: 1.38104</div>
      <div className={`${cell} w-[71px]`}>H: 1.38541</div>
      <div className={`${cell} w-[68px]`}>L: 1.37843</div>
      <div className={`${cell} w-[70px]`}>C: 1.38241</div>
      <div className={`${cell} w-[66px]`}>V: 211906</div>
      <div className={`${cell} w-[130px] gap-1`}>
        <svg width="23" height="13" shapeRendering="crispEdges">
          {[0, 1, 2, 3, 4, 5, 6, 7].map((i) => (
            <g key={i}>
              <rect x={i * 3} y="0" width="2" height={10 - i} fill="#4f8010" />
              <rect x={i * 3} y={11 - i} width="2" height={2 + i} fill="#8c1a00" />
            </g>
          ))}
        </svg>
        34/1 kb
      </div>
    </footer>
  );
}

/* ---------- window ---------- */

export default function App() {
  return (
    <div className="flex min-h-screen flex-col bg-[#f0f0f0] font-[Roboto,sans-serif] text-[12px] leading-[14px] text-black">
      <header className="flex h-[23px] shrink-0 items-center bg-white pl-[2px]">
        {I.logo}
        <h1 className="ml-[5px] flex-1">6242416: OANDA-GMT-5 Practice - Demo Account - [EURUSD,Weekly]</h1>
        <div className="flex items-center gap-[35px] pr-[20px]">
          <button aria-label="Minimize"><Svg w={11} h={11}><path d="M0 5.500h11" stroke="#000" /></Svg></button>
          <button aria-label="Restore"><Svg w={11} h={11}><path d="M.5 2.500h8v8h-8zM2.500 2V.5h8v8H9" stroke="#000" /></Svg></button>
          <button aria-label="Close"><Svg w={11} h={11}><path d="M.5.5l10 10M10.500.5l-10 10" stroke="#000" strokeWidth="1.200" /></Svg></button>
        </div>
      </header>

      <nav className="flex h-[21px] shrink-0 items-center border-b border-[#a0a0a0] pl-1">
        {I.doc}
        <div className="flex flex-1">
          {["File", "View", "Insert", "Charts", "Tools", "Window", "Help"].map((m) => (
            <button key={m} className="pr-2 pl-[9px]">{m}</button>
          ))}
        </div>
        <div className="flex gap-[2px] pr-px">
          <button aria-label="Minimize chart" className="flex h-[18px] w-[17px] items-center justify-center border border-[#e3e3e3] bg-white">
            <Svg w={8} h={8}><path d="M1 6.500h6" stroke="#6b7d90" strokeWidth="1.500" /></Svg>
          </button>
          <button aria-label="Restore chart" className="flex h-[18px] w-[17px] items-center justify-center border border-[#e3e3e3] bg-white">
            <Svg w={9} h={8}><path d="M.5 3.500h5v4h-5zM.5 4h5M3 2.500v-2h5v4H6.500M3 1h5" stroke="#6b7d90" /></Svg>
          </button>
          <button aria-label="Close chart" className="flex h-[18px] w-[17px] items-center justify-center border border-[#e3e3e3] bg-white">
            <Svg w={8} h={8}><path d="M1 1l6 6M7 1l-6 6" stroke="#6b7d90" strokeWidth="2" /></Svg>
          </button>
        </div>
      </nav>

      <div className="shrink-0 border-t border-b border-t-white border-b-[#a0a0a0]">
        <ToolbarRows />
      </div>

      <Chart />

      <div className="mt-px flex h-[21px] shrink-0 border-t-2 border-b border-t-black border-b-white leading-[17px]">
        <div role="tablist" className="flex min-w-0 flex-1 pl-1">
          {CHART_TABS.map(([n, w], i) => (
            <Tab key={n} name={n} width={w} active={i === 5} divider={i !== 4 && i !== 5} />
          ))}
        </div>
        <div className="flex items-center gap-[18px] pr-[9px]">
          <button aria-label="Previous tabs"><svg width="5" height="6"><path d="M4 0V6L0 3Z" fill="#808080" /></svg></button>
          <button aria-label="Next tabs"><svg width="5" height="6"><path d="M1 0V6L5 3Z" fill="#808080" /></svg></button>
        </div>
      </div>

      <Terminal />
      <div className="flex-1" />
      <StatusBar />
    </div>
  );
}
